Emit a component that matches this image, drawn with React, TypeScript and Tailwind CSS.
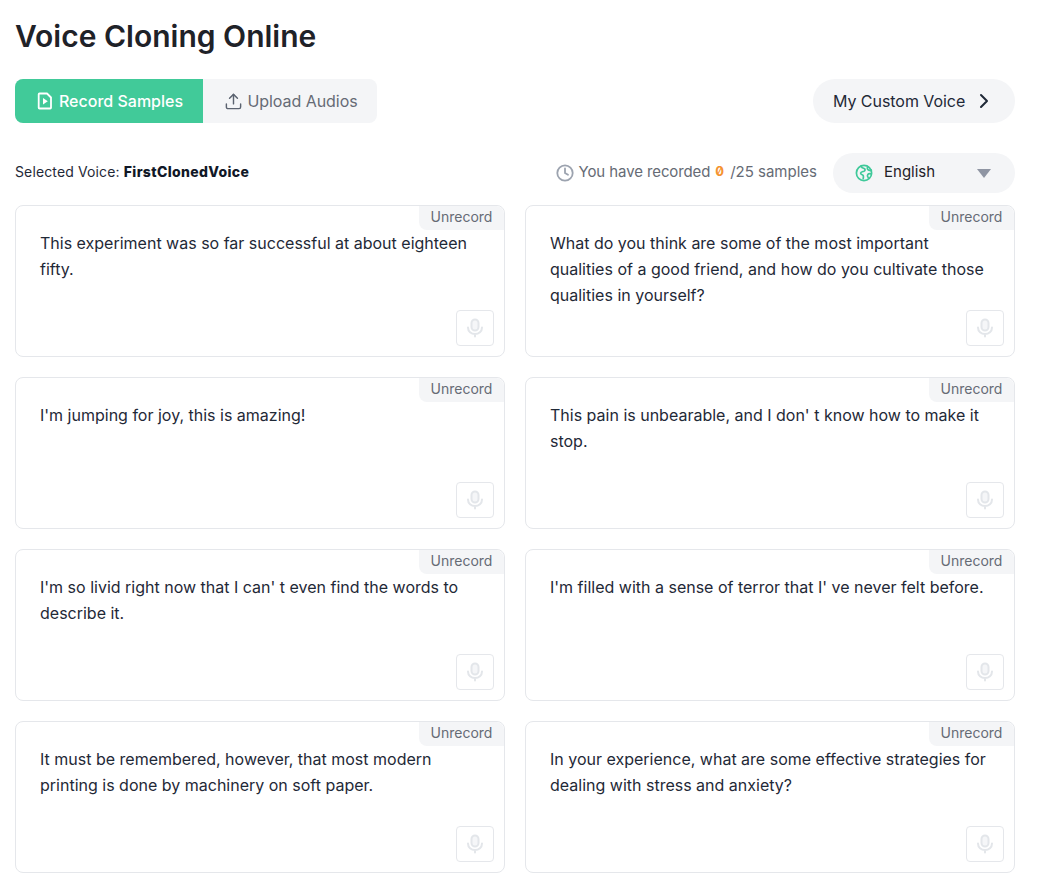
import { ChevronRight, Upload } from 'lucide-react';

const samples = [
  'This experiment was so far successful at about eighteen fifty.',
  'What do you think are some of the most important qualities of a good friend, and how do you cultivate those qualities in yourself?',
  "I'm jumping for joy, this is amazing!",
  "This pain is unbearable, and I don' t know how to make it stop.",
  "I'm so livid right now that I can' t even find the words to describe it.",
  "I'm filled with a sense of terror that I' ve never felt before.",
  'It must be remembered, however, that most modern printing is done by machinery on soft paper.',
  'In your experience, what are some effective strategies for dealing with stress and anxiety?',
];

const FilePlayIcon = () => (
  <svg width="16" height="18" viewBox="0 0 16 18" fill="none" stroke="currentColor" strokeWidth="1.8" strokeLinejoin="round">
    <path d="M2.500 1.500h7.500l4 4v10.200a.8.8 0 0 1-.8.8H2.500a.8.8 0 0 1-.8-.8V2.300a.8.8 0 0 1 .8-.8z" />
    <path d="M6 6l4.800 3.200L6 12.400z" fill="currentColor" stroke="none" />
  </svg>
);

const GlobeIcon = () => (
  <svg width="18" height="18" viewBox="0 0 18 18" fill="none" stroke="#3fc99a" strokeWidth="1.7" strokeLinecap="round" strokeLinejoin="round">
    <circle cx="9" cy="9" r="7.600" />
    <path d="M6 2.200c.6 1.600 2 2 3.200 2.400 1.300.5 1.100 2.100-.2 2.600-1.400.5-3.200.5-3.400 1.900-.1 1 1 1.500 2 1.900.9.400 1 1.800.6 3.600" />
    <path d="M12.800 2.800c-.9 1.400-.5 2.900.9 3.300.9.300 1.800.2 2.600 0M16.400 10c-1.500-.5-2.900-.4-3.600.6-.7 1-.3 2.300.5 3.200" />
  </svg>
);

const MicIcon = () => (
  <svg width="18" height="20" viewBox="0 0 18 20" fill="none" stroke="#e3e6ea" strokeWidth="2" strokeLinecap="round">
    <rect x="5.500" y="1.500" width="7" height="11" rx="3.500" fill="#e3e6ea" fillOpacity="0.35" />
    <path d="M2 9.500c0 3.900 3.100 6.500 7 6.500s7-2.600 7-6.500M9 16v2.500" />
  </svg>
);

const SampleCard = ({ text }: { text: string }) => (
  <div className="relative h-[152px] rounded-lg border border-gray-200 bg-white px-6 pt-[24px]">
    <span className="absolute right-0 top-0 flex h-6 w-[85px] items-center justify-center rounded-bl-lg rounded-tr-lg bg-[#f4f5f7] pb-[2px] text-sm text-[#666b75]">
      Unrecord
    </span>
    <p className="text-base leading-[26px] text-[#1f2937]">{text}</p>
    <button className="absolute bottom-[10px] right-[10px] flex h-9 w-[38px] items-center justify-center rounded border border-gray-200 bg-white">
      <MicIcon />
    </button>
  </div>
);

export default function App() {
  return (
    <div className="min-h-screen bg-white px-[15px] pb-[9px] pr-[29px] pt-[14px] font-['Inter',sans-serif] text-[#1f2228]">
      <h1 className="text-[30px] font-semibold leading-[44px]">Voice Cloning Online</h1>

      <div className="mt-[21px] flex items-center justify-between">
        <div className="flex h-11 overflow-hidden rounded-lg bg-[#f4f5f7] text-base">
          <button className="flex w-[188px] items-center justify-center gap-[6px] bg-[#41ca99] pl-[2px] font-medium text-white">
            <FilePlayIcon />
            Record Samples
          </button>
          <button className="flex w-[174px] items-center justify-center gap-[4px] pl-[2px] tracking-[-0.05px] text-[#666b75]">
            <Upload size={19} strokeWidth={1.8} color="#5b6370" />
            Upload Audios
          </button>
        </div>
        <button className="flex h-11 w-[202px] items-center gap-[7px] rounded-full bg-[#f4f5f7] pl-5 text-base tracking-[-0.05px] text-[#1f2937]">
          My Custom Voice
          <ChevronRight size={24} strokeWidth={2} />
        </button>
      </div>

      <div className="mt-[30px] flex h-10 items-center justify-between">
        <div className="pb-[2px] text-sm tracking-[0.13px] text-[#1f2937]">
          Selected Voice: <span className="font-extrabold tracking-[0.35px] text-[#111827]">FirstClonedVoice</span>
        </div>
        <div className="flex items-center">
          <svg width="18" height="18" viewBox="0 0 18 18" fill="none" stroke="#9ca3af" strokeWidth="1.8" strokeLinecap="round">
            <circle cx="9" cy="9" r="7.700" />
            <path d="M9 4.500V9l3 1.800" />
          </svg>
          <span className="ml-[5px] pb-[2px] text-[15px] tracking-[-0.1px] text-[#666b75]">You have recorded</span>
          <span className="ml-[5px] pb-[2px] text-[13px] font-bold slashed-zero text-[#f59331]">0</span>
          <span className="ml-[6px] pb-[2px] text-[15px] text-[#666b75]">/25 samples</span>
          <div className="ml-4 flex h-10 w-[182px] items-center rounded-full bg-[#f4f5f7] pl-[22px] pr-[24px]">
            <GlobeIcon />
            <span className="ml-[11px] pb-[2px] text-[15px] text-[#1f2228]">English</span>
            <span className="ml-auto h-0 w-0 border-x-[7px] border-t-[9px] border-x-transparent border-t-[#8f95a3]" />
          </div>
        </div>
      </div>

      <div className="mt-3 grid grid-cols-2 gap-5">
        {samples.map((text) => (
          <SampleCard key={text} text={text} />
        ))}
      </div>
    </div>
  );
}
